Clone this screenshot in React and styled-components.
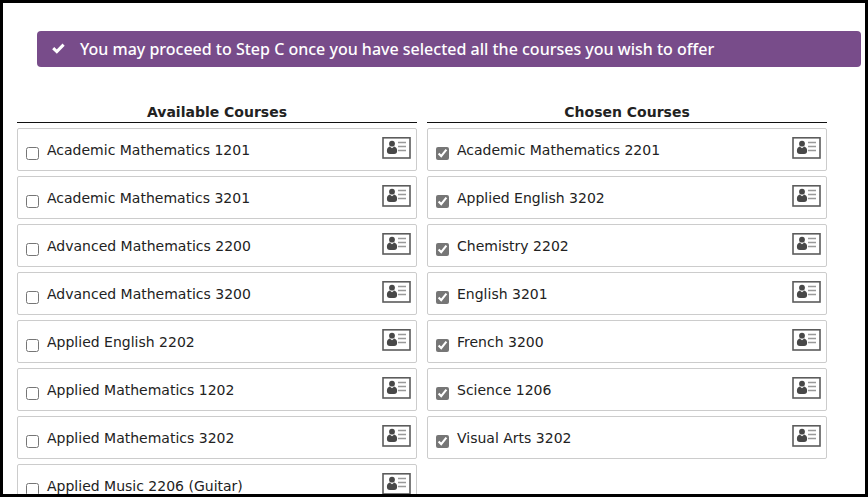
import React, { useId } from "react";
import styled, { createGlobalStyle } from "styled-components";

const GlobalStyle = createGlobalStyle`
  *, *::before, *::after { box-sizing: border-box; }
  body {
    margin: 0;
    background: #fff;
    color: #222;
    font-family: Verdana, "DejaVu Sans", sans-serif;
    font-size: 14px;
  }
`;

const Frame = styled.main`
  height: 100vh;
  overflow: hidden;
  border: 3px solid #000;
  background: #fff;
`;

const Banner = styled.div`
  display: flex;
  align-items: center;
  gap: 14px;
  min-height: 36px;
  margin: 28px 4px 0 34px;
  padding: 0 14px;
  border-radius: 4px;
  background: #784c8a;
  color: #fff;
  font-family: "Noto Sans", sans-serif;
  font-size: 16px;
  font-weight: 500;
  line-height: 20px;
`;

const Tick = styled.svg`
  flex: none;
  width: 15px;
  height: 14px;
  margin-bottom: 2px;
`;

const Columns = styled.div`
  display: grid;
  grid-template-columns: 1fr 1fr;
  align-items: start;
  gap: 10px;
  margin: 35px 38px 0 14px;
`;

const Title = styled.h2`
  margin: 0 0 5px;
  border-bottom: 1px solid #111;
  font-size: 14px;
  font-weight: 700;
  line-height: 20px;
  text-align: center;
`;

const CourseList = styled.ul`
  display: flex;
  flex-direction: column;
  gap: 5px;
  margin: 0;
  padding: 0;
  list-style: none;
`;

const Course = styled.li`
  display: flex;
  align-items: center;
  min-height: 43px;
  padding: 0 5px 0 8px;
  border: 1px solid #ccc;
  border-radius: 2px;
`;

const Checkbox = styled.input`
  flex: none;
  width: 13px;
  height: 13px;
  margin: 8px 8px 0 0;
  accent-color: #767676;
`;

const CourseName = styled.label`
  flex: 1;
  line-height: 20px;
`;

const DetailsButton = styled.button`
  flex: none;
  display: block;
  margin: 0 0 3px;
  padding: 0;
  border: 0;
  background: none;
  cursor: pointer;

  svg { display: block; }
`;

function CardIcon() {
  return (
    <svg width="29" height="22" viewBox="0 0 29 22" aria-hidden="true">
      <rect x="1" y="0.8" width="27" height="20.2" fill="#fff" stroke="#5c5c5c" strokeWidth="1.6" />
      <circle cx="10" cy="6.7" r="2.9" fill="#484848" />
      <path d="M7.7 9.5Q4.9 10.6 4.9 13.8Q4.9 17 7.9 17H12.1Q15.1 17 15.1 13.8Q15.1 10.6 12.3 9.5L10 11.2Z" fill="#484848" />
      <path d="M16 5.5H24M16 9.5H24M16 13.5H24" stroke="#999" strokeWidth="1.3" />
    </svg>
  );
}

function CourseColumn({ title, courses, chosen }) {
  const id = useId();
  return (
    <section aria-labelledby={id}>
      <Title id={id}>{title}</Title>
      <CourseList>
        {courses.map((name, i) => (
          <Course key={name}>
            <Checkbox type="checkbox" id={`${id}-${i}`} defaultChecked={chosen} />
            <CourseName htmlFor={`${id}-${i}`}>{name}</CourseName>
            <DetailsButton type="button" aria-label={`Details for ${name}`}>
              <CardIcon />
            </DetailsButton>
          </Course>
        ))}
      </CourseList>
    </section>
  );
}

const available = [
  "Academic Mathematics 1201",
  "Academic Mathematics 3201",
  "Advanced Mathematics 2200",
  "Advanced Mathematics 3200",
  "Applied English 2202",
  "Applied Mathematics 1202",
  "Applied Mathematics 3202",
  "Applied Music 2206 (Guitar)",
];

const chosen = [
  "Academic Mathematics 2201",
  "Applied English 3202",
  "Chemistry 2202",
  "English 3201",
  "French 3200",
  "Science 1206",
  "Visual Arts 3202",
];

export default function App() {
  return (
    <>
      <GlobalStyle />
      <Frame>
        <Banner role="status">
          <Tick viewBox="0 0 15 14" aria-hidden="true">
            <path d="M2.2 7.2L5.8 10.6L12.6 3.6" fill="none" stroke="#fff" strokeWidth="3" />
          </Tick>
          You may proceed to Step C once you have selected all the courses you wish to offer
        </Banner>
        <Columns>
          <CourseColumn title="Available Courses" courses={available} />
          <CourseColumn title="Chosen Courses" courses={chosen} chosen />
        </Columns>
      </Frame>
    </>
  );
}
